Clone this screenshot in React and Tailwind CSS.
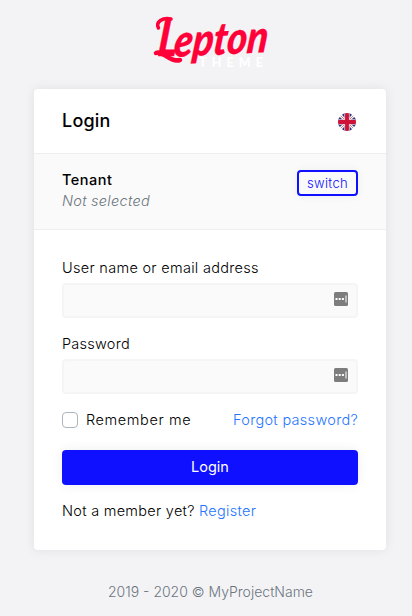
import React from "react";

function Logo() {
  return (
    <svg width="160" height="89" viewBox="130 0 160 89" role="img" aria-label="Lepton Theme" className="block">
      <g fill="#ff0038" stroke="#ff0038" strokeLinejoin="round" fontFamily="Lato, sans-serif" fontWeight="900" fontStyle="italic">
        <text transform="translate(157 56) skewX(-6)" fontSize="52" strokeWidth="0.6" textLength="19" lengthAdjust="spacingAndGlyphs">L</text>
        <text transform="translate(173 57) rotate(-3) skewX(-9)" fontSize="45" strokeWidth="0.3" textLength="94" lengthAdjust="spacingAndGlyphs">epton</text>
      </g>
      <path d="M156 53C163 50 170 63 180 60" fill="none" stroke="#ff0038" strokeWidth="4.5" strokeLinecap="round" />
      <path d="M158.5 28C155 22 163 17 171 19" fill="none" stroke="#ff0038" strokeWidth="3.5" strokeLinecap="round" />
      <text x="199" y="67" fill="#ffffff" fontFamily="Lato, sans-serif" fontSize="12.5" fontWeight="700" textLength="64">THEME</text>
    </svg>
  );
}

function Flag() {
  return (
    <svg width="18" height="18" viewBox="0 0 18 18" className="mt-0.5 block rounded-full">
      <rect width="18" height="18" fill="#fff" />
      <path d="M2.5 0H7V5ZM0 2.5V7H5ZM15.5 0H11V5ZM18 2.5V7H13ZM2.5 18H7V13ZM0 15.5V11H5ZM15.5 18H11V13ZM18 15.5V11H13Z" fill="#263a7c" stroke="#263a7c" strokeWidth="0.3" />
      <path d="M2 2L7 7M16 2L11 7M2 16L7 11M16 16L11 11" stroke="#d64b67" strokeWidth="0.8" />
      <path d="M9 0V18M0 9H18" stroke="#f4c4cf" strokeWidth="5.4" />
      <path d="M9 0V18M0 9H18" stroke="#cf1237" strokeWidth="3.8" />
    </svg>
  );
}

function KeeperIcon() {
  return (
    <svg width="14" height="14" viewBox="0 0 14 14" className="block">
      <rect width="14" height="14" rx="1.5" fill="#7d7d7d" />
      <path d="M1.5 6h2v2h-2zM4.7 6h2v2h-2zM7.9 6h2v2h-2zM11.5 3.5h1v7h-1z" fill="#fff" />
    </svg>
  );
}

function Field({ label, labelClass }) {
  return (
    <label className="block h-[76px]">
      <span className={"block h-[25px] leading-[20px] whitespace-nowrap " + labelClass}>{label}</span>
      <span className="flex h-[35px] items-start justify-end rounded border-2 border-[#f5f5f6] bg-[#fafafa] pt-[7px] pr-[8px]">
        <KeeperIcon />
      </span>
    </label>
  );
}

export default function App() {
  return (
    <div className="flex h-[616px] w-[412px] flex-col bg-[#f3f3f6] font-['Inter','Open_Sans',sans-serif] text-[14.5px] font-light text-black">
      <div className="ml-[130px] h-[89px]">
        <Logo />
      </div>
      <main className="ml-[34px] h-[461px] w-[352px] overflow-hidden rounded bg-white shadow-[0_0_12px_rgba(0,0,0,0.08)]">
        <header className="flex h-[65px] items-center justify-between border-b border-[#eeeeef] pr-[30px] pl-7">
          <h1 className="text-[18px] leading-6 font-medium tracking-[0.2px]">Login</h1>
          <Flag />
        </header>
        <section className="flex h-[76px] items-start justify-between border-b border-[#eeeeef] bg-[#fafafa] px-7 pt-[15px]">
          <div className="leading-[21px]">
            <div className="font-medium tracking-[0.5px]">Tenant</div>
            <div className="tracking-[0.27px] text-[#6c757d] italic">Not selected</div>
          </div>
          <button className="mt-px flex h-[26px] w-[61px] items-center justify-center rounded border-2 border-[#0f10ff] text-[13px] leading-5 tracking-[0.3px] text-[#0f10ff] shadow-[0_0_10px_rgba(0,0,0,0.05)]">
            switch
          </button>
        </section>
        <form className="px-7 pt-[28px]">
          <Field label="User name or email address" labelClass="tracking-[0.3px]" />
          <Field label="Password" labelClass="tracking-[0.25px]" />
          <div className="flex h-[20px] items-center justify-between">
            <label className="flex items-center gap-2">
              <span className="block h-4 w-4 rounded border border-[#adb5bd] bg-white" />
              <span className="-mt-px tracking-[0.6px]">Remember me</span>
            </label>
            <a className="-mt-px tracking-[0.3px] text-[#2675ff]">Forgot password?</a>
          </div>
          <button type="button" className="mt-5 flex h-[35px] w-full items-center justify-center rounded bg-[#0f10ff] pb-px font-normal text-white shadow-[0_0_12px_rgba(0,0,0,0.07)]">
            Login
          </button>
          <p className="mt-[16px] leading-5 tracking-[0.28px]">
            Not a member yet? <a className="text-[#2675ff]">Register</a>
          </p>
        </form>
      </main>
      <footer className="mt-[32px] pl-[108px] text-[14px] leading-5 whitespace-nowrap text-[#6c757d]">
        2019 - 2020 © MyProjectName
      </footer>
    </div>
  );
}
